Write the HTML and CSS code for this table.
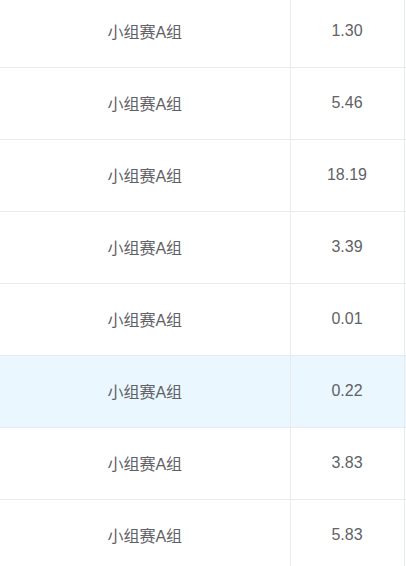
FILE: index.html
```html
<!DOCTYPE html>
<html lang="zh-CN">
<head>
  <meta charset="UTF-8" />
  <meta name="viewport" content="width=device-width, initial-scale=1.0"/>
  <title>小组赛</title>
  <link rel="stylesheet" href="styles.css">
</head>
<body>
  <div class="table-wrap">
    <table class="match-table">
      <tbody>
        <tr><td class="col-name">小组赛A组</td><td class="col-value">1.30</td><td class="col-rest"></td></tr>
        <tr><td class="col-name">小组赛A组</td><td class="col-value">5.46</td><td class="col-rest"></td></tr>
        <tr><td class="col-name">小组赛A组</td><td class="col-value">18.19</td><td class="col-rest"></td></tr>
        <tr><td class="col-name">小组赛A组</td><td class="col-value">3.39</td><td class="col-rest"></td></tr>
        <tr><td class="col-name">小组赛A组</td><td class="col-value">0.01</td><td class="col-rest"></td></tr>
        <tr class="current-row"><td class="col-name">小组赛A组</td><td class="col-value">0.22</td><td class="col-rest"></td></tr>
        <tr><td class="col-name">小组赛A组</td><td class="col-value">3.83</td><td class="col-rest"></td></tr>
        <tr><td class="col-name">小组赛A组</td><td class="col-value">5.83</td><td class="col-rest"></td></tr>
      </tbody>
    </table>
  </div>
</body>
</html>
```

FILE: styles.css
```css
:root {
  --border-color: #e8eaec;
  --text-color: #5f6266;
  --current-bg: #ebf7ff;
}

* {
  box-sizing: border-box;
  margin: 0;
  padding: 0;
}

body {
  font-family: "Liberation Sans", "Noto Sans CJK SC", sans-serif;
  background-color: #ffffff;
  color: var(--text-color);
  height: 566px;
  overflow: hidden;
}

.table-wrap {
  margin-top: -5px;
}

.match-table {
  width: 420px;
  border-collapse: collapse;
  table-layout: fixed;
  font-size: 16px;
}

.match-table td {
  height: 72px;
  text-align: center;
  vertical-align: middle;
  border-bottom: 1px solid var(--border-color);
}

.col-name {
  width: 290px;
  border-right: 1px solid var(--border-color);
}

.col-value {
  width: 114px;
  border-right: 1px solid var(--border-color);
}

.current-row td {
  background-color: var(--current-bg);
}
```
